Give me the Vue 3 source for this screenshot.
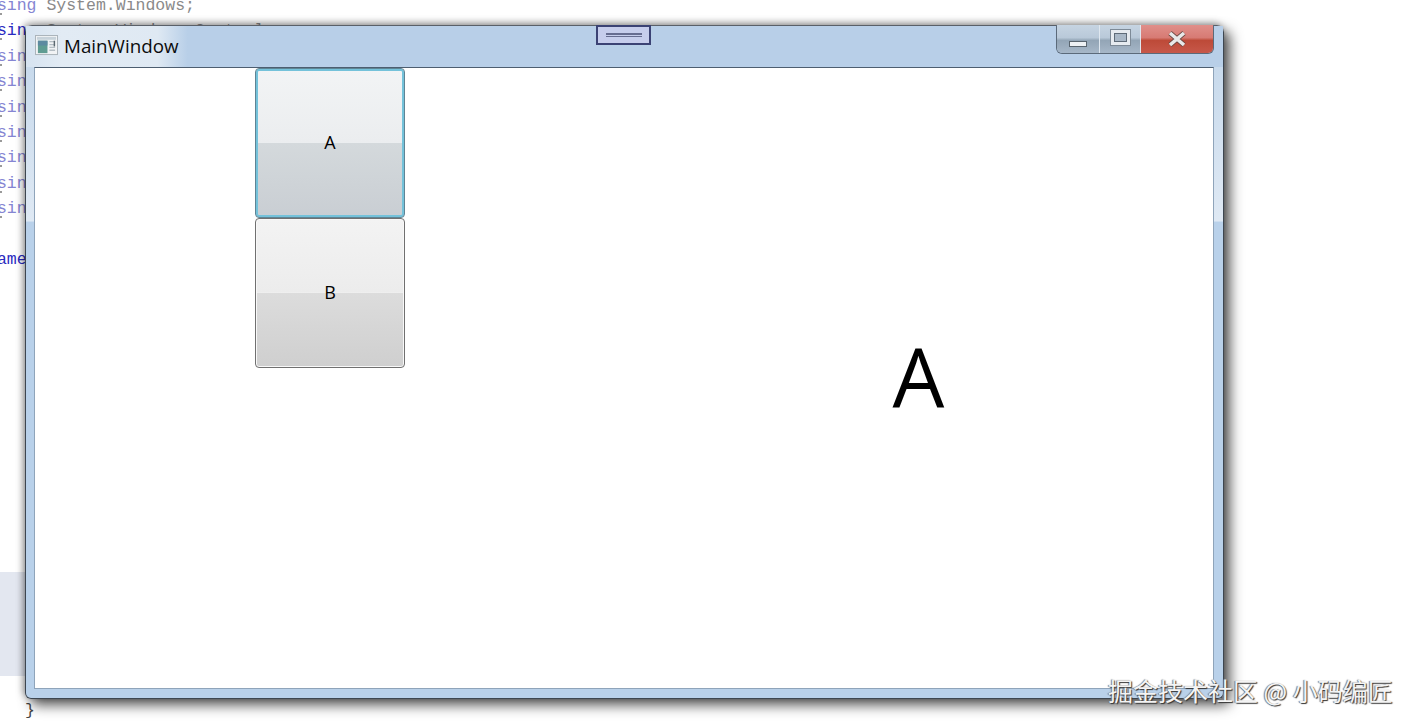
<script setup>
const codeLines = [
  { kw: "using", rest: " System.Windows;", tone: "soft", dot: true },
  { kw: "using", rest: " System.Windows.Controls;", tone: "dark", dot: true },
  { kw: "using", rest: "", tone: "soft", dot: true },
  { kw: "using", rest: "", tone: "soft", dot: true },
  { kw: "using", rest: "", tone: "soft", dot: true },
  { kw: "using", rest: "", tone: "soft", dot: true },
  { kw: "using", rest: "", tone: "soft", dot: true },
  { kw: "using", rest: "", tone: "soft", dot: true },
  { kw: "using", rest: "", tone: "soft", dot: true },
  { kw: "", rest: "", tone: "soft" },
  { kw: "namespace", rest: "", tone: "dark" },
];
const buttons = [
  { label: "A", focused: true },
  { label: "B", focused: false },
];
</script>

<template>
  <div class="desktop">
    <div class="code">
      <div v-for="(line, i) in codeLines" :key="i" class="code-line" :class="{ dotted: line.dot }">
        <span :class="line.tone">{{ line.kw }}</span><span class="rest">{{ line.rest }}</span>
      </div>
    </div>
    <div class="editor-band"></div>
    <div class="closing-brace">}</div>

    <div class="window">
      <div class="title-bar">
        <div class="title-left">
          <svg class="app-icon" width="23" height="21" viewBox="0 0 24 22">
            <rect x="0.5" y="0.5" width="23" height="20" fill="#f1f3f5" stroke="#a9b1b8" />
            <rect x="2" y="2" width="20" height="3" fill="#c7d2da" />
            <rect x="3" y="6" width="10" height="13" fill="#5f9c92" />
            <rect x="3" y="6" width="10" height="5" fill="#5d8aa0" />
            <path d="M15 7h6M15 10h6M15 13h6M15 16h6" stroke="#b4bdc4" stroke-width="1.4" />
            <rect x="19.5" y="6" width="1.5" height="6" fill="#5b6870" />
          </svg>
          <span class="title-text">MainWindow</span>
        </div>
        <div class="drag-handle"><span></span><span></span></div>
        <div class="caption">
          <button class="cap cap-min"><span class="min-glyph"></span></button>
          <button class="cap cap-max"><span class="max-glyph"></span></button>
          <button class="cap cap-close">
            <svg width="20" height="16" viewBox="0 0 20 16">
              <path d="M3 2 L17 14 M17 2 L3 14" stroke="#6b4640" stroke-width="5" />
              <path d="M3 2 L17 14 M17 2 L3 14" stroke="#e8e8e8" stroke-width="3.6" />
            </svg>
          </button>
        </div>
      </div>

      <div class="client">
        <div class="button-stack">
          <button v-for="b in buttons" :key="b.label" class="push" :class="{ focused: b.focused }">
            {{ b.label }}
          </button>
        </div>
        <div class="stage">A</div>
      </div>
    </div>

    <div class="watermark">掘金技术社区 @ 小码编匠</div>
  </div>
</template>

<style>
html,
body {
  margin: 0;
  background: #fff;
  overflow: hidden;
}
</style>

<style scoped>
.desktop {
  position: relative;
  width: 1416px;
  height: 726px;
  overflow: hidden;
  background: #fff;
}

.code {
  position: absolute;
  left: -13px;
  top: -7px;
  font-family: "Liberation Mono", monospace;
  font-size: 16.5px;
  line-height: 25.4px;
  white-space: pre;
}
.code-line {
  position: relative;
  height: 25.4px;
}
.code-line.dotted::after {
  content: "";
  position: absolute;
  left: 13px;
  top: 20px;
  width: 2px;
  height: 2px;
  background: #9a9a9a;
}
.soft {
  color: #8585d2;
}
.dark {
  color: #2a2ac0;
}
.rest {
  color: #8a8a8a;
}

.editor-band {
  position: absolute;
  left: 0;
  top: 572px;
  width: 30px;
  height: 104px;
  background: #e3e7f0;
}
.closing-brace {
  position: absolute;
  left: 25px;
  top: 701px;
  font-family: "Liberation Mono", monospace;
  font-size: 16.5px;
  color: #444;
}

.window {
  position: absolute;
  left: 25px;
  top: 25px;
  box-sizing: border-box;
  width: 1199px;
  height: 674px;
  display: flex;
  flex-direction: column;
  padding: 0 9px 9px 8px;
  border-radius: 7px 7px 6px 6px;
  border: 1px solid #3d4650;
  border-top-color: #5a6068;
  background: linear-gradient(to bottom, #c2d6ea 0, #dfe9f4 29%, #b9d1ea 29.2%, #b9d1ea 100%);
  box-shadow: 6px 6px 13px rgba(0, 0, 0, 0.68), -2px -2px 7px rgba(0, 0, 0, 0.35);
}

.title-bar {
  position: relative;
  height: 41px;
  flex: none;
  display: flex;
  align-items: flex-start;
  justify-content: space-between;
  margin: 0 -9px 0 -8px;
  padding-left: 9px;
  background: linear-gradient(to right, #d6e3f0 0, #e2ebf4 3%, #dfe9f3 11%, #b8cfe8 13.5%, #b8cfe8 100%);
}
.title-left {
  display: flex;
  align-items: center;
  gap: 6px;
  height: 41px;
  margin-top: -1px;
}
.app-icon {
  flex: none;
}
.title-text {
  font-family: "Open Sans", sans-serif;
  font-size: 18.8px;
  color: #0c0c0c;
}

.drag-handle {
  position: absolute;
  left: 570px;
  top: -1px;
  box-sizing: border-box;
  width: 55px;
  height: 20px;
  border: 2px solid #3b4274;
  background: #c6cdec;
  display: flex;
  flex-direction: column;
  align-items: center;
  justify-content: center;
  gap: 1px;
}
.drag-handle span {
  width: 36px;
  height: 1.5px;
  background: #666c90;
}

.caption {
  display: flex;
  margin-top: -1px;
  margin-right: 9px;
  height: 29px;
  border: 1px solid #5b6a7a;
  border-top: none;
  border-radius: 0 0 6px 6px;
  overflow: hidden;
  box-sizing: border-box;
}
.cap {
  border: none;
  padding: 0;
  margin: 0;
  height: 100%;
  display: flex;
  align-items: center;
  justify-content: center;
}
.cap-min,
.cap-max {
  background: linear-gradient(to bottom, #c6d4e2 0, #b9c9d9 45%, #93a5b6 55%, #a6b7c8 100%);
  border-right: 1px solid #dfe7ef;
}
.cap-min {
  width: 43px;
}
.cap-max {
  width: 41px;
}
.cap-close {
  width: 72px;
  background: linear-gradient(to bottom, #e08f8a 0, #d77b74 45%, #bd4a38 55%, #c7584a 100%);
}
.min-glyph {
  width: 18px;
  height: 6px;
  margin-top: 10px;
  background: #eef1f4;
  border: 1px solid #59646e;
  box-sizing: border-box;
}
.max-glyph {
  width: 19px;
  height: 15px;
  margin-top: -3px;
  box-sizing: border-box;
  background: #a9b8c7;
  border: 3px solid #e6ebf0;
  box-shadow: inset 0 0 0 1px #5e6b78, 0 0 0 1px #7d8a97;
}

.client {
  flex: 1;
  display: flex;
  min-height: 0;
  background: #fff;
  border: 1px solid #4f6070;
  border-color: #4d5e70 #8fa4ba #8fa4ba #8fa4ba;
}
.button-stack {
  margin-left: 220px;
  width: 150px;
  display: flex;
  flex-direction: column;
}
.push {
  width: 150px;
  height: 150px;
  box-sizing: border-box;
  padding: 0 0 2px;
  border: 1px solid #707070;
  border-radius: 4px;
  box-shadow: inset 0 0 0 1px #f8f8f8;
  background: linear-gradient(to bottom, #f3f3f3 0, #ececec 49.5%, #f4f4f4 49.5%, #dcdcdc 50.2%, #cfcfcf 100%);
  font-family: "Open Sans", sans-serif;
  font-size: 18px;
  color: #000;
}
.push.focused {
  border-color: #5f8494;
  box-shadow: inset 0 0 0 2px #74c2da;
  background: linear-gradient(to bottom, #f2f4f5 0, #ebedef 49.5%, #f2f4f5 49.5%, #d4d9dc 50.2%, #c9ced3 100%);
}
.stage {
  flex: 1;
  padding-left: 219px;
  padding-bottom: 4px;
  display: flex;
  align-items: center;
  justify-content: center;
  font-family: "Open Sans", sans-serif;
  font-size: 82px;
  line-height: 1;
  color: #000;
}

.watermark {
  position: absolute;
  left: 1108px;
  top: 674px;
  font-family: "Noto Sans CJK SC", sans-serif;
  font-size: 25px;
  line-height: 32px;
  white-space: nowrap;
  color: #f4f4f4;
  text-shadow: 1px 1px 1px #333, -1px 0 1px #777;
}
</style>
